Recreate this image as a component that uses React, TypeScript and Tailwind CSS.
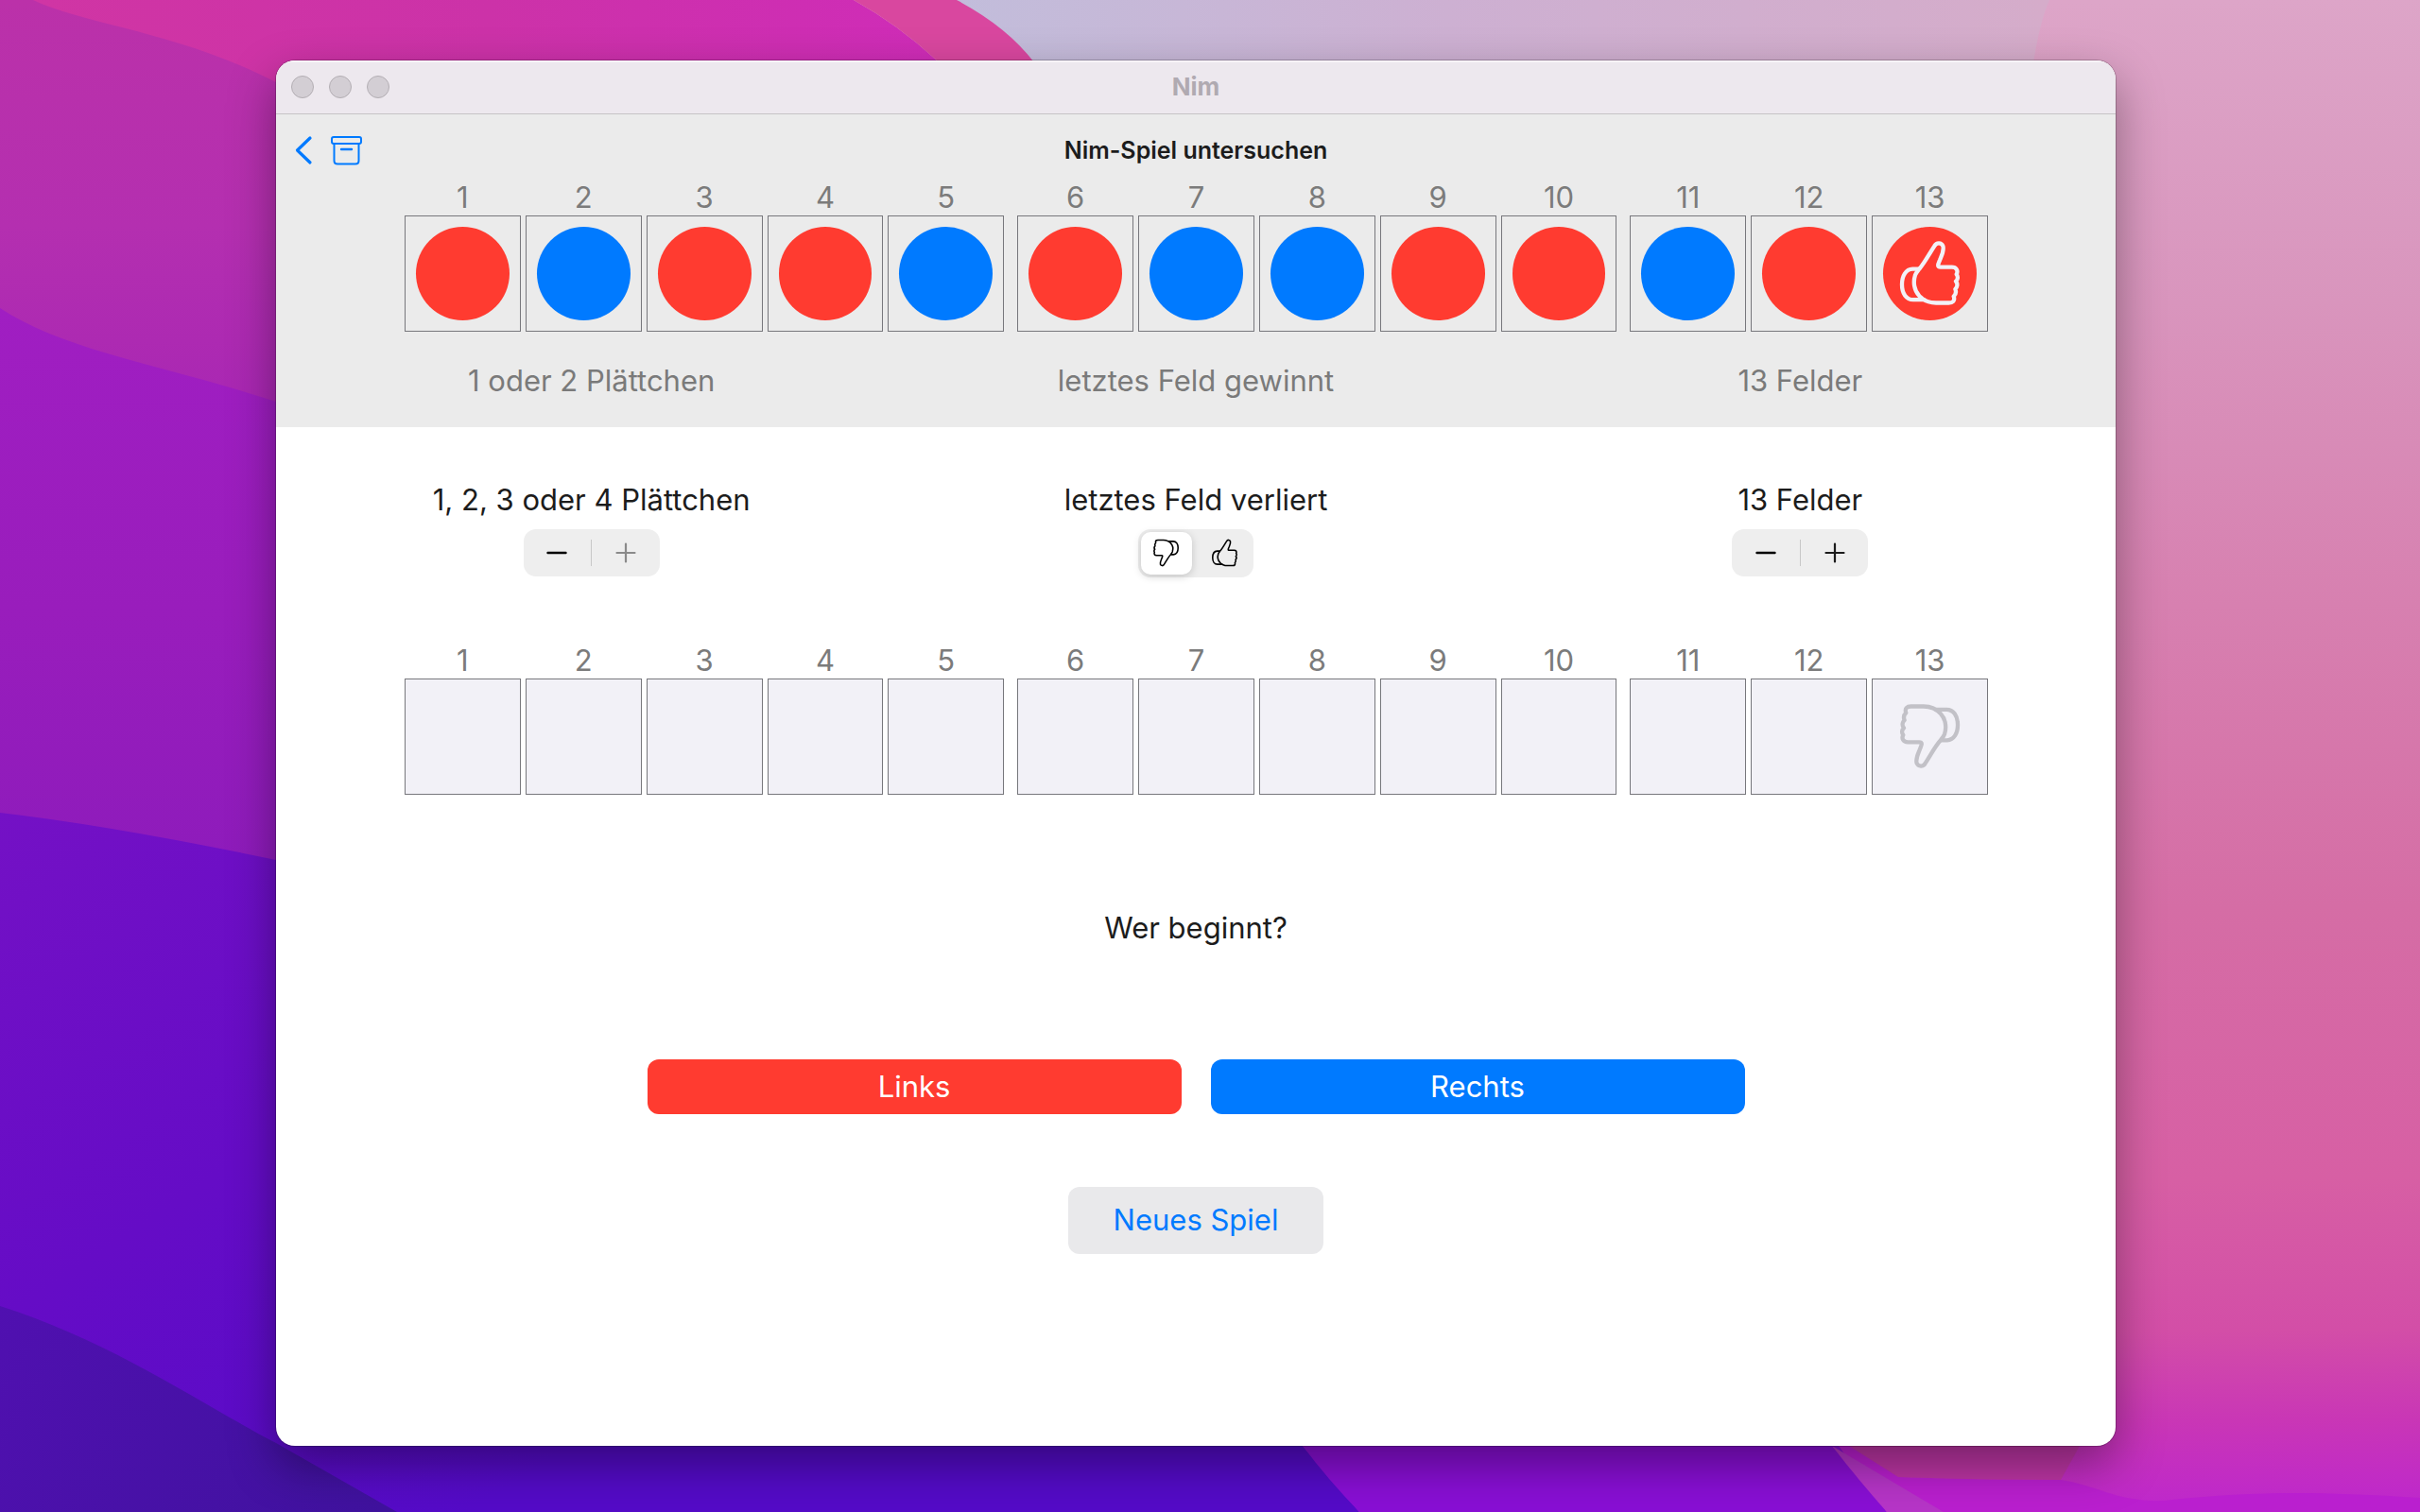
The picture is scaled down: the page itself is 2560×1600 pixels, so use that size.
import { useState } from "react";

type Player = "red" | "blue";

const PLAYED: Player[] = [
  "red", "blue", "red", "red", "blue",
  "red", "blue", "blue", "red", "red",
  "blue", "red", "red",
];

const RULES = [
  "1 Plättchen",
  "1 oder 2 Plättchen",
  "1, 2 oder 3 Plättchen",
  "1, 2, 3 oder 4 Plättchen",
];

function Wallpaper() {
  return (
    <svg
      className="absolute inset-0 -z-10 h-full w-full"
      viewBox="0 0 2560 1600"
      preserveAspectRatio="none"
      aria-hidden="true"
    >
      <defs>
        <linearGradient id="top" gradientUnits="userSpaceOnUse" x1="35" y1="0" x2="1000" y2="0">
          <stop offset="0" stopColor="#d035a4" />
          <stop offset="0.5" stopColor="#cc32a8" />
          <stop offset="1" stopColor="#cf2cb8" />
        </linearGradient>
        <linearGradient id="mauve" x1="0" y1="0" x2="0" y2="1">
          <stop offset="0" stopColor="#bb31a9" />
          <stop offset="0.5" stopColor="#b42fb0" />
          <stop offset="1" stopColor="#a625b4" />
        </linearGradient>
        <linearGradient id="violet" x1="0" y1="0" x2="0" y2="1">
          <stop offset="0" stopColor="#a01ec2" />
          <stop offset="0.5" stopColor="#991dbc" />
          <stop offset="1" stopColor="#8c1bbb" />
        </linearGradient>
        <linearGradient id="indigo" gradientUnits="userSpaceOnUse" x1="0" y1="860" x2="500" y2="1600">
          <stop offset="0" stopColor="#7411c5" />
          <stop offset="0.5" stopColor="#650cc6" />
          <stop offset="1" stopColor="#540bc8" />
        </linearGradient>
        <linearGradient id="deep" gradientUnits="userSpaceOnUse" x1="0" y1="1382" x2="400" y2="1600">
          <stop offset="0" stopColor="#5010b0" />
          <stop offset="1" stopColor="#3f129e" />
        </linearGradient>
        <linearGradient id="sky" gradientUnits="userSpaceOnUse" x1="1014" y1="0" x2="2160" y2="0">
          <stop offset="0" stopColor="#c2bddb" />
          <stop offset="0.45" stopColor="#cdb0d2" />
          <stop offset="1" stopColor="#d5acca" />
        </linearGradient>
        <linearGradient id="rose" gradientUnits="userSpaceOnUse" x1="2380" y1="0" x2="2400" y2="1600">
          <stop offset="0" stopColor="#dda5c8" />
          <stop offset="0.2" stopColor="#d995bd" />
          <stop offset="0.4" stopColor="#d780b0" />
          <stop offset="0.6" stopColor="#d56da5" />
          <stop offset="0.78" stopColor="#d75fa4" />
          <stop offset="0.88" stopColor="#d34ea7" />
          <stop offset="0.94" stopColor="#c936b6" />
          <stop offset="1" stopColor="#bd26cd" />
        </linearGradient>
      </defs>
      <rect width="2560" height="1600" fill="url(#rose)" />
      <path d="M1000 0H2168Q2150 40 2140 160H1000Z" fill="url(#sky)" />
      <path d="M0 0H903Q950 26 991 64L1020 90V300H0Z" fill="url(#top)" />
      <path d="M903 0H1012Q1065 28 1094 66V110H1030L991 64Q950 26 903 0Z" fill="#d9479f" />
      <path d="M0 0H35C90 26 190 34 292 87L420 140V480H0Z" fill="url(#mauve)" />
      <path d="M0 326C70 372 170 385 292 425L500 500V960H0Z" fill="url(#violet)" />
      <path d="M0 860Q120 874 292 910L1200 1100L1378 1530L1438 1600H0Z" fill="url(#indigo)" />
      <path d="M0 1382C120 1420 220 1490 292 1527L420 1600H0Z" fill="url(#deep)" />
      <path d="M1300 1440H1880L1996 1600H1438Q1405 1566 1378 1530Z" fill="#890fd5" />
      <path d="M1900 1480L2008 1563Q2090 1566 2180 1566C2220 1572 2240 1590 2290 1588C2400 1576 2470 1580 2560 1585V1600H1996L1880 1440Z" fill="#ba1fcf" />
      <path d="M1938 1530L2056 1600H1996Q1965 1565 1938 1530Z" fill="#b735c8" />
      <path d="M1956 1530L2008 1563Q2090 1566 2180 1566L2200 1530Z" fill="#bd35a4" />
    </svg>
  );
}

function ThumbIcon({ down = false, stroke, className }: { down?: boolean; stroke: number; className: string }) {
  return (
    <svg
      className={down ? `${className} rotate-180` : className}
      viewBox="84 102 202 210"
      fill="none"
      stroke="currentColor"
      strokeWidth={stroke}
      strokeLinejoin="round"
      strokeLinecap="round"
      aria-hidden="true"
    >
      <path d="M150 195C166 178 182 148 200 120C206 109 222 109 227 121C231 136 222 152 217 165C212 177 206 188 219 188H255C270 188 276 199 270 211C276 218 274 228 268 233C275 242 272 252 266 258C270 268 268 275 261 281C266 296 258 302 245 302H205C180 302 162 292 150 278C135 262 131 236 138 214C141 206 146 200 150 195Z" />
      <path d="M148 194H130C108 195 96 216 96 243C96 272 110 292 132 292H166" />
    </svg>
  );
}

function Board({ cells, filled, marker }: { cells: number; filled?: Player[]; marker: "up" | "down" }) {
  return (
    <ol className="flex gap-[5px] pl-[136px] pr-[135px]">
      {Array.from({ length: cells }, (_, i) => {
        const last = i === cells - 1;
        const piece = filled?.[i];
        return (
          <li key={i} className={i > 0 && i % 5 === 0 ? "ml-[9px] min-w-0 flex-1" : "min-w-0 flex-1"}>
            <div className="mb-[3px] text-center text-[31px] leading-8 text-[#7b7b7b]">{i + 1}</div>
            <div
              className={
                filled
                  ? "flex aspect-square items-center justify-center border border-[#77777c] p-[11px]"
                  : "flex aspect-square items-center justify-center border border-[#77777c] bg-[#f2f1f7] p-[11px]"
              }
            >
              {piece ? (
                <div
                  className={
                    piece === "red"
                      ? "flex size-full items-center justify-center rounded-full bg-[#ff3b30] text-[#f2f1f7]"
                      : "flex size-full items-center justify-center rounded-full bg-[#007aff] text-[#f2f1f7]"
                  }
                >
                  {last && <ThumbIcon down={marker === "down"} stroke={13} className="h-[70px] w-[67px]" />}
                </div>
              ) : (
                last && (
                  <ThumbIcon down={marker === "down"} stroke={13} className="h-[70px] w-[67px] text-[#c2c1c7]" />
                )
              )}
            </div>
          </li>
        );
      })}
    </ol>
  );
}

function Stepper({ label, value, min, max, onChange }: {
  label: string; value: number; min: number; max: number; onChange: (v: number) => void;
}) {
  return (
    <div role="group" aria-label={label} className="flex h-[50px] w-36 items-center rounded-[13px] bg-[#eeeeee]">
      <button
        type="button"
        aria-label="Weniger"
        disabled={value <= min}
        onClick={() => onChange(value - 1)}
        className="flex h-full flex-1 items-center justify-center text-black disabled:text-[#8a8a8a]"
      >
        <svg className="size-6" viewBox="0 0 24 24" stroke="currentColor" strokeWidth="2.4" strokeLinecap="round" aria-hidden="true">
          <path d="M2.5 12H21.5" />
        </svg>
      </button>
      <span className="h-7 w-px bg-[#c8c8c8]" />
      <button
        type="button"
        aria-label="Mehr"
        disabled={value >= max}
        onClick={() => onChange(value + 1)}
        className="flex h-full flex-1 items-center justify-center text-[#1c1c1c] disabled:text-[#8a8a8a]"
      >
        <svg className="size-6" viewBox="0 0 24 24" stroke="currentColor" strokeWidth="2.2" strokeLinecap="round" aria-hidden="true">
          <path d="M2.5 12H21.5M12 2.5V21.5" />
        </svg>
      </button>
    </div>
  );
}

export default function App() {
  const [rule, setRule] = useState(4);
  const [fields, setFields] = useState(13);
  const [goal, setGoal] = useState<"up" | "down">("down");

  return (
    <div className="relative isolate flex min-h-screen flex-col overflow-hidden pt-16 pr-[322px] pb-[70px] pl-[292px] font-['Inter',sans-serif]">
      <Wallpaper />
      <div className="flex flex-1 flex-col overflow-hidden rounded-[20px] bg-white shadow-[0_0_0_1px_rgba(0,0,0,0.2),0_20px_50px_rgba(0,0,0,0.38)]">
        <div className="grid h-[57px] grid-cols-3 items-center border-b border-b-[#c6c3c6] bg-[#ede8ee] px-4 shadow-[inset_0_2px_0_#f7f3f7]">
          <div className="flex gap-4">
            <button type="button" aria-label="Schließen" className="size-6 rounded-full border border-[#b3aeb3] bg-[#d3ced4]" />
            <button type="button" aria-label="Minimieren" className="size-6 rounded-full border border-[#b3aeb3] bg-[#d3ced4]" />
            <button type="button" aria-label="Zoomen" className="size-6 rounded-full border border-[#b3aeb3] bg-[#d3ced4]" />
          </div>
          <div className="text-center text-[26px] leading-8 font-bold text-[#b0aab1]">Nim</div>
        </div>

        <header className="bg-[#ebebeb] pb-[29px]">
          <div className="grid h-18 grid-cols-[1fr_auto_1fr] items-center px-5 pt-[3px]">
            <nav className="flex items-center gap-[18px] text-[#007aff]">
              <button type="button" aria-label="Zurück">
                <svg className="h-8 w-5" viewBox="0 0 20 32" fill="none" stroke="currentColor" strokeWidth="3.2" strokeLinecap="round" strokeLinejoin="round" aria-hidden="true">
                  <path d="M16 3L2.500 16L16 29" />
                </svg>
              </button>
              <button type="button" aria-label="Archiv">
                <svg className="h-8 w-[34px]" viewBox="0 0 34 32" fill="none" stroke="currentColor" strokeWidth="2" strokeLinecap="round" strokeLinejoin="round" aria-hidden="true">
                  <rect x="1" y="2" width="31" height="7" rx="2" />
                  <path d="M3.500 9V27Q3.500 30.500 7 30.500H26Q29.500 30.500 29.500 27V9" />
                  <path d="M11 15H22" strokeWidth="2.400" />
                </svg>
              </button>
            </nav>
            <h1 className="text-[25px] leading-8 font-semibold text-[#1c1c1c]">Nim-Spiel untersuchen</h1>
          </div>
          <Board cells={13} filled={PLAYED} marker="up" />
          <div className="mt-8 grid grid-cols-3 px-[14px] text-center text-[31px] leading-10 text-[#7a7a7a]">
            <p>1 oder 2 Plättchen</p>
            <p>letztes Feld gewinnt</p>
            <p>13 Felder</p>
          </div>
        </header>

        <main className="flex flex-col pt-[57px] text-[31px] leading-10 text-[#1c1c1c]">
          <div className="mb-[72px] grid grid-cols-3 px-[14px]">
            <div className="flex flex-col items-center gap-[11px]">
              <p>{RULES[rule - 1]}</p>
              <Stepper label="Plättchen" value={rule} min={1} max={4} onChange={setRule} />
            </div>
            <div className="flex flex-col items-center gap-[11px]">
              <p>{goal === "down" ? "letztes Feld verliert" : "letztes Feld gewinnt"}</p>
              <div role="radiogroup" aria-label="Spielziel" className="flex h-[51px] w-[122px] gap-[8px] rounded-[13px] bg-[#eeeeee] p-[3px]">
                {(["down", "up"] as const).map((g) => (
                  <label
                    key={g}
                    className="flex flex-1 cursor-pointer items-center justify-center rounded-[10px] text-black has-checked:bg-white has-checked:shadow-[0_2px_8px_rgba(0,0,0,0.18)]"
                  >
                    <input
                      type="radio"
                      name="goal"
                      aria-label={g === "down" ? "letztes Feld verliert" : "letztes Feld gewinnt"}
                      checked={goal === g}
                      onChange={() => setGoal(g)}
                      className="sr-only"
                    />
                    <ThumbIcon down={g === "down"} stroke={11} className="h-[30px] w-[29px]" />
                  </label>
                ))}
              </div>
            </div>
            <div className="flex flex-col items-center gap-[11px]">
              <p>{fields} Felder</p>
              <Stepper label="Felder" value={fields} min={5} max={15} onChange={setFields} />
            </div>
          </div>

          <Board cells={fields} marker={goal} />

          <p className="mt-[121px] text-center">Wer beginnt?</p>

          <div className="mt-[119px] flex justify-center gap-[31px] px-10 text-white">
            <button type="button" className="h-[58px] w-[565px] rounded-xl bg-[#ff3b30]">Links</button>
            <button type="button" className="h-[58px] w-[565px] rounded-xl bg-[#007aff]">Rechts</button>
          </div>

          <button type="button" className="mt-[77px] h-[71px] self-center rounded-xl bg-[#e9e9eb] px-12 text-[#007aff]">
            Neues Spiel
          </button>
        </main>
      </div>
    </div>
  );
}
